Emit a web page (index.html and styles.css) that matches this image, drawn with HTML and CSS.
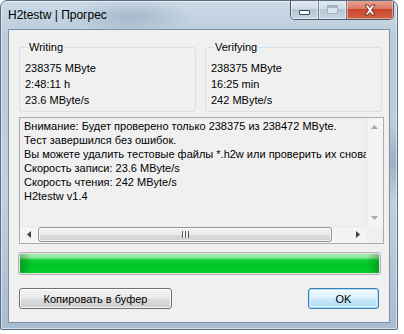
FILE: index.html
```html
<!DOCTYPE html>
<html lang="ru">
<head>
    <meta charset="UTF-8">
    <meta name="viewport" content="width=device-width, initial-scale=1.0">
    <title>H2testw | Прогрес</title>
    <link rel="stylesheet" href="styles.css">
</head>
<body>
    <div class="window">
        <div class="titlebar">
            <span class="title">H2testw | Прогрес</span>
            <div class="caption-buttons">
                <div class="cap-btn cap-min"><span class="min-glyph"></span></div>
                <div class="cap-btn cap-max"><span class="max-glyph"></span></div>
                <div class="cap-btn cap-close">
                    <svg width="14" height="12" viewBox="0 0 14 12">
                        <path d="M2 1 L5 1 L7 3.6 L9 1 L12 1 L8.6 6 L12 11 L9 11 L7 8.4 L5 11 L2 11 L5.4 6 Z" fill="#fff" stroke="#6a2418" stroke-width="0.9" stroke-linejoin="round"/>
                    </svg>
                </div>
            </div>
        </div>

        <div class="client">
            <div class="groups">
                <fieldset class="group">
                    <legend>Writing</legend>
                    <div class="value">238375 MByte</div>
                    <div class="value">2:48:11 h</div>
                    <div class="value">23.6 MByte/s</div>
                </fieldset>
                <fieldset class="group">
                    <legend>Verifying</legend>
                    <div class="value">238375 MByte</div>
                    <div class="value">16:25 min</div>
                    <div class="value">242 MByte/s</div>
                </fieldset>
            </div>

            <div class="memo">
                <div class="memo-text">
                    <div>Внимание: Будет проверено только 238375 из 238472 MByte.</div>
                    <div>Тест завершился без ошибок.</div>
                    <div>Вы можете удалить тестовые файлы *.h2w или проверить их снова.</div>
                    <div>Скорость записи: 23.6 MByte/s</div>
                    <div>Скорость чтения: 242 MByte/s</div>
                    <div>H2testw v1.4</div>
                </div>
                <div class="vscroll">
                    <div class="arrow-box">
                        <svg width="7" height="4" viewBox="0 0 7 4"><path d="M0 4 L3.5 0 L7 4 Z" fill="#a6a6a6"/></svg>
                    </div>
                    <div class="arrow-box">
                        <svg width="7" height="4" viewBox="0 0 7 4"><path d="M0 0 L3.5 4 L7 0 Z" fill="#a6a6a6"/></svg>
                    </div>
                </div>
                <div class="hscroll">
                    <div class="arrow-box">
                        <svg width="4" height="7" viewBox="0 0 4 7"><path d="M4 0 L0 3.5 L4 7 Z" fill="#404040"/></svg>
                    </div>
                    <div class="track">
                        <div class="thumb"><span class="grip"></span></div>
                    </div>
                    <div class="arrow-box">
                        <svg width="4" height="7" viewBox="0 0 4 7"><path d="M0 0 L4 3.5 L0 7 Z" fill="#404040"/></svg>
                    </div>
                </div>
                <div class="corner"></div>
            </div>

            <div class="progress">
                <div class="progress-fill"></div>
            </div>

            <div class="buttons">
                <button class="btn btn-copy">Копировать в буфер</button>
                <button class="btn btn-ok">OK</button>
            </div>
        </div>
    </div>
</body>
</html>
```

FILE: styles.css
```css
* {
    margin: 0;
    padding: 0;
    box-sizing: border-box;
}

body {
    background-color: #ffffff;
    font-family: "Liberation Sans", Arial, sans-serif;
    font-size: 11px;
    color: #000;
}

.window {
    width: 398px;
    height: 330px;
    display: flex;
    flex-direction: column;
    border: 1px solid #5a6c80;
    border-radius: 7px 7px 2px 2px;
    background:
        radial-gradient(ellipse 60px 18px at 130px 16px, rgba(110, 135, 160, 0.35), transparent),
        radial-gradient(ellipse 50px 40px at 395px 160px, rgba(90, 115, 140, 0.35), transparent),
        linear-gradient(to bottom, #cbd9e6 0%, #b9cbdc 12%, #bfd0e0 60%, #a9bdd1 100%);
    box-shadow: inset 0 0 0 1px rgba(255, 255, 255, 0.55);
    overflow: hidden;
}

.titlebar {
    height: 28px;
    display: flex;
    justify-content: space-between;
    align-items: flex-start;
    padding-left: 7px;
}

.title {
    font-size: 12px;
    line-height: 12px;
    margin-top: 8px;
    color: #000;
}

.caption-buttons {
    display: flex;
    margin-right: 3px;
    margin-top: -1px;
    height: 20px;
    border: 1px solid #4b5866;
    border-top: none;
    border-radius: 0 0 5px 5px;
    overflow: hidden;
}

.cap-btn {
    display: flex;
    align-items: center;
    justify-content: center;
    height: 100%;
}

.cap-min,
.cap-max {
    width: 28px;
    background: linear-gradient(to bottom, #e3ebf3 0%, #cfdbe7 45%, #b6c6d6 50%, #c7d5e3 100%);
    border-right: 1px solid #6f7f90;
    box-shadow: inset 0 0 0 1px rgba(255, 255, 255, 0.5);
}

.cap-close {
    width: 46px;
    background: linear-gradient(to bottom, #e9a597 0%, #dc7a66 45%, #c8452c 50%, #d3614a 100%);
    box-shadow: inset 0 0 0 1px rgba(255, 230, 220, 0.5);
}

.min-glyph {
    width: 11px;
    height: 5px;
    margin-top: 5px;
    background: #fff;
    border: 1px solid #39424c;
    border-radius: 1px;
}

.max-glyph {
    width: 11px;
    height: 9px;
    border: 1px solid #a6b4c2;
    border-top-width: 3px;
    background: #dbe4ec;
}

.client {
    flex: 1;
    margin: 0 7px 6px 7px;
    border: 1px solid #7d90a4;
    background-color: #f0f0f0;
    padding: 11px 5px 12px 10px;
    display: flex;
    flex-direction: column;
}

.groups {
    display: flex;
    gap: 9px;
}

.group {
    width: 177px;
    border: 1px solid #d5dfe5;
    border-radius: 3px;
    padding: 6px 5px 3px 5px;
}

.group legend {
    margin-left: 3px;
    padding: 0 1px;
    line-height: 13px;
}

.value {
    line-height: 16px;
}

.memo {
    margin-top: 5px;
    height: 127px;
    border: 1px solid #abadb3;
    display: grid;
    grid-template-columns: 1fr 17px;
    grid-template-rows: 1fr 17px;
    background-color: #f0f0f0;
}

.memo-text {
    padding: 1px 0 0 4px;
    overflow: hidden;
    white-space: nowrap;
}

.memo-text div {
    line-height: 14px;
}

.vscroll {
    display: flex;
    flex-direction: column;
    justify-content: space-between;
    background: linear-gradient(to right, #e6e6e6 0, #f3f3f3 2px, #f5f5f5 100%);
}

.hscroll {
    display: flex;
    background: linear-gradient(to bottom, #e6e6e6 0, #f3f3f3 2px, #f5f5f5 100%);
}

.arrow-box {
    width: 17px;
    height: 17px;
    display: flex;
    align-items: center;
    justify-content: center;
    flex-shrink: 0;
}

.track {
    flex: 1;
    padding: 1px 0 1px 1px;
}

.thumb {
    width: 294px;
    height: 100%;
    border: 1px solid #979797;
    border-radius: 3px;
    background: linear-gradient(to bottom, #f3f3f3 0%, #e9e9e9 50%, #d9d9d9 51%, #d3d3d3 100%);
    box-shadow: inset 0 0 0 1px rgba(255, 255, 255, 0.7);
    display: flex;
    align-items: center;
    justify-content: center;
}

.grip {
    width: 7px;
    height: 7px;
    background: repeating-linear-gradient(to right, #5a5a5a 0, #5a5a5a 1px, #f0f0f0 1px, #f0f0f0 3px);
}

.corner {
    background-color: #f0f0f0;
}

.progress {
    margin: 8px 3px 0 -1px;
    height: 23px;
    border: 1px solid #b2b2b2;
    border-radius: 3px;
    padding: 1px;
    background-color: #e6e6e6;
}

.progress-fill {
    height: 100%;
    border-radius: 1px;
    background:
        linear-gradient(to right, rgba(0, 60, 10, 0.28) 0, rgba(0, 60, 10, 0) 12px, rgba(0, 60, 10, 0) calc(100% - 12px), rgba(0, 60, 10, 0.28) 100%),
        linear-gradient(to bottom, #a6efb0 0%, #8be799 20%, #17cf3a 30%, #00c422 55%, #03cf2a 100%);
}

.buttons {
    margin-top: 13px;
    margin-right: 5px;
    display: flex;
    justify-content: space-between;
}

.btn {
    height: 21px;
    font-family: "Liberation Sans", Arial, sans-serif;
    font-size: 11px;
    color: #000;
    border: 1px solid #707070;
    border-radius: 3px;
    background: linear-gradient(to bottom, #f2f2f2 0%, #ebebeb 48%, #dddddd 52%, #cfcfcf 100%);
    box-shadow: inset 0 0 0 1px rgba(255, 255, 255, 0.8);
}

.btn-copy {
    width: 153px;
}

.btn-ok {
    width: 71px;
    border-color: #3c7fb1;
    background: linear-gradient(to bottom, #edf7fd 0%, #def2fc 48%, #c6e8fb 52%, #b3def6 100%);
    box-shadow: inset 0 0 0 1px #a9dbf6, inset 0 0 0 2px rgba(255, 255, 255, 0.5);
}
```
